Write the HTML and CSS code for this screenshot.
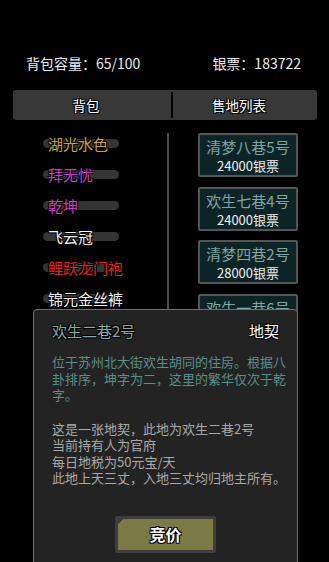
FILE: index.html
```html
<!DOCTYPE html>
<html lang="zh">
<head>
  <meta charset="UTF-8" />
  <title>背包</title>
  <link rel="stylesheet" href="styles.css">
</head>
<body>
  <div class="stats">
    <span>背包容量：65/100</span>
    <span>银票：183722</span>
  </div>

  <div class="tabs">
    <div class="tab tab-bag">背包</div>
    <div class="tab-sep"></div>
    <div class="tab">售地列表</div>
  </div>

  <div class="body-content">
    <ul class="bag">
      <li class="item gold"><i class="pill"></i><span>湖光水色</span></li>
      <li class="item purple"><i class="pill"></i><span>拜无忧</span></li>
      <li class="item purple"><i class="pill"></i><span>乾坤</span></li>
      <li class="item white"><i class="pill"></i><span>飞云冠</span></li>
      <li class="item red"><i class="pill"></i><span>鲤跃龙门袍</span></li>
      <li class="item white"><i class="pill"></i><span>锦元金丝裤</span></li>
    </ul>
    <div class="col-sep"></div>
    <div class="lands">
      <div class="land"><div class="land-name">清梦八巷5号</div><div class="land-price">24000银票</div></div>
      <div class="land"><div class="land-name">欢生七巷4号</div><div class="land-price">24000银票</div></div>
      <div class="land"><div class="land-name">清梦四巷2号</div><div class="land-price">28000银票</div></div>
      <div class="land"><div class="land-name">欢生一巷6号</div><div class="land-price">26000银票</div></div>
    </div>
  </div>

  <!-- POPUP DETAIL -->
  <div class="popup">
    <div class="popup-head">
      <span class="popup-title">欢生二巷2号</span>
      <span class="popup-type">地契</span>
    </div>
    <p class="desc">位于苏州北大街欢生胡同的住房。根据八卦排序，坤字为二，这里的繁华仅次于乾字。</p>
    <p class="info">这是一张地契，此地为欢生二巷2号<br>当前持有人为官府<br>每日地税为50元宝/天<br>此地上天三丈，入地三丈均归地主所有。</p>
    <div class="actions">
      <button class="bid-btn">竞价</button>
    </div>
  </div>
</body>
</html>
```

FILE: styles.css
```css
html, body {
  margin: 0;
  height: 562px;
  overflow: hidden;
}

body {
  background: #000;
  color: #ddd;
  font-family: "Noto Sans CJK SC", "Noto Sans", sans-serif;
  position: relative;
}

.stats {
  display: flex;
  justify-content: space-between;
  padding: 54px 28px 0 26px;
  font-size: 14px;
  line-height: 18px;
  color: #ececec;
}

.tabs {
  display: flex;
  margin: 18px 12px 0 13px;
  height: 30px;
  background: #383838;
  border-radius: 3px;
  align-items: center;
}

.tab {
  flex: 1;
  text-align: center;
  padding-right: 12px;
  font-size: 13.5px;
  color: #fff;
  text-shadow: 1px 1px 0 #000, -1px -1px 0 #000, 1px -1px 0 #000, -1px 1px 0 #000;
}

.tab-bag {
  flex: 0 0 158px;
  box-sizing: border-box;
}

.tab-sep {
  width: 2px;
  height: 26px;
  background: #000;
}

.body-content {
  display: flex;
}

.bag {
  list-style: none;
  margin: 0;
  padding: 8px 0 0;
  width: 167px;
}

.item {
  display: grid;
  grid-template-areas: "a";
  align-items: center;
  height: 31px;
  font-size: 15px;
}

.item > * {
  grid-area: a;
}

.pill {
  margin-left: 43px;
  width: 76px;
  height: 9px;
  border-radius: 5px;
  background: #353535;
}

.item span {
  margin-left: 48px;
  line-height: 20px;
  text-shadow: 1px 1px 0 #000, -1px -1px 0 #000, 1px -1px 0 #000, -1px 1px 0 #000;
}

.gold { color: #c9a23e; }
.purple { color: #cf3bcf; }
.white { color: #f2f2f2; }
.red { color: #e42020; }

.col-sep {
  width: 2px;
  margin-top: 13px;
  height: 450px;
  background: #4a4a4a;
}

.lands {
  display: flex;
  flex-direction: column;
  gap: 9.5px;
  padding: 13px 0 0 29px;
}

.land {
  width: 100px;
  height: 44px;
  box-sizing: border-box;
  border: 2px solid #555;
  border-radius: 2px;
  background: #0c2426;
  text-align: center;
  overflow: hidden;
}

.land-name {
  padding-top: 2px;
  font-size: 15px;
  line-height: 20px;
  color: #7fa6a4;
}

.land-price {
  font-size: 13px;
  line-height: 18px;
  color: #f0f0f0;
}

/* popup lies over the lists */
.popup {
  position: absolute;
  left: 33px;
  top: 309px;
  width: 265px;
  height: 260px;
  box-sizing: border-box;
  background: #232323;
  border: 1px solid #707070;
  border-radius: 4px;
  padding: 10px 18px 0 18px;
}

.popup-head {
  display: flex;
  justify-content: space-between;
  font-size: 15px;
  line-height: 22px;
}

.popup-title {
  color: #86aca6;
  text-shadow: 1px 1px 0 #000, -1px -1px 0 #000, 1px -1px 0 #000, -1px 1px 0 #000;
}

.popup-type {
  color: #fff;
  text-shadow: 1px 1px 0 #000, -1px -1px 0 #000, 1px -1px 0 #000, -1px 1px 0 #000;
}

.desc, .info {
  margin: 0;
  width: 240px;
  font-size: 13px;
  line-height: 16.5px;
}

.desc {
  margin-top: 12px;
  color: #5b8e89;
}

.info {
  margin-top: 17px;
  color: #a9a9a9;
}

.actions {
  display: flex;
  justify-content: center;
  margin-top: 29px;
}

.bid-btn {
  width: 101px;
  height: 37px;
  padding: 0;
  border: 3px solid #3e3e3e;
  border-radius: 2px;
  background: linear-gradient(135deg, #3e3e3e 4px, #7a7a45 4px);
  color: #fff;
  font-family: "Noto Sans CJK SC", sans-serif;
  font-size: 16px;
  font-weight: bold;
  text-shadow: 1px 1px 0 #000, -1px -1px 0 #000, 1px -1px 0 #000, -1px 1px 0 #000;
  cursor: pointer;
}
```
